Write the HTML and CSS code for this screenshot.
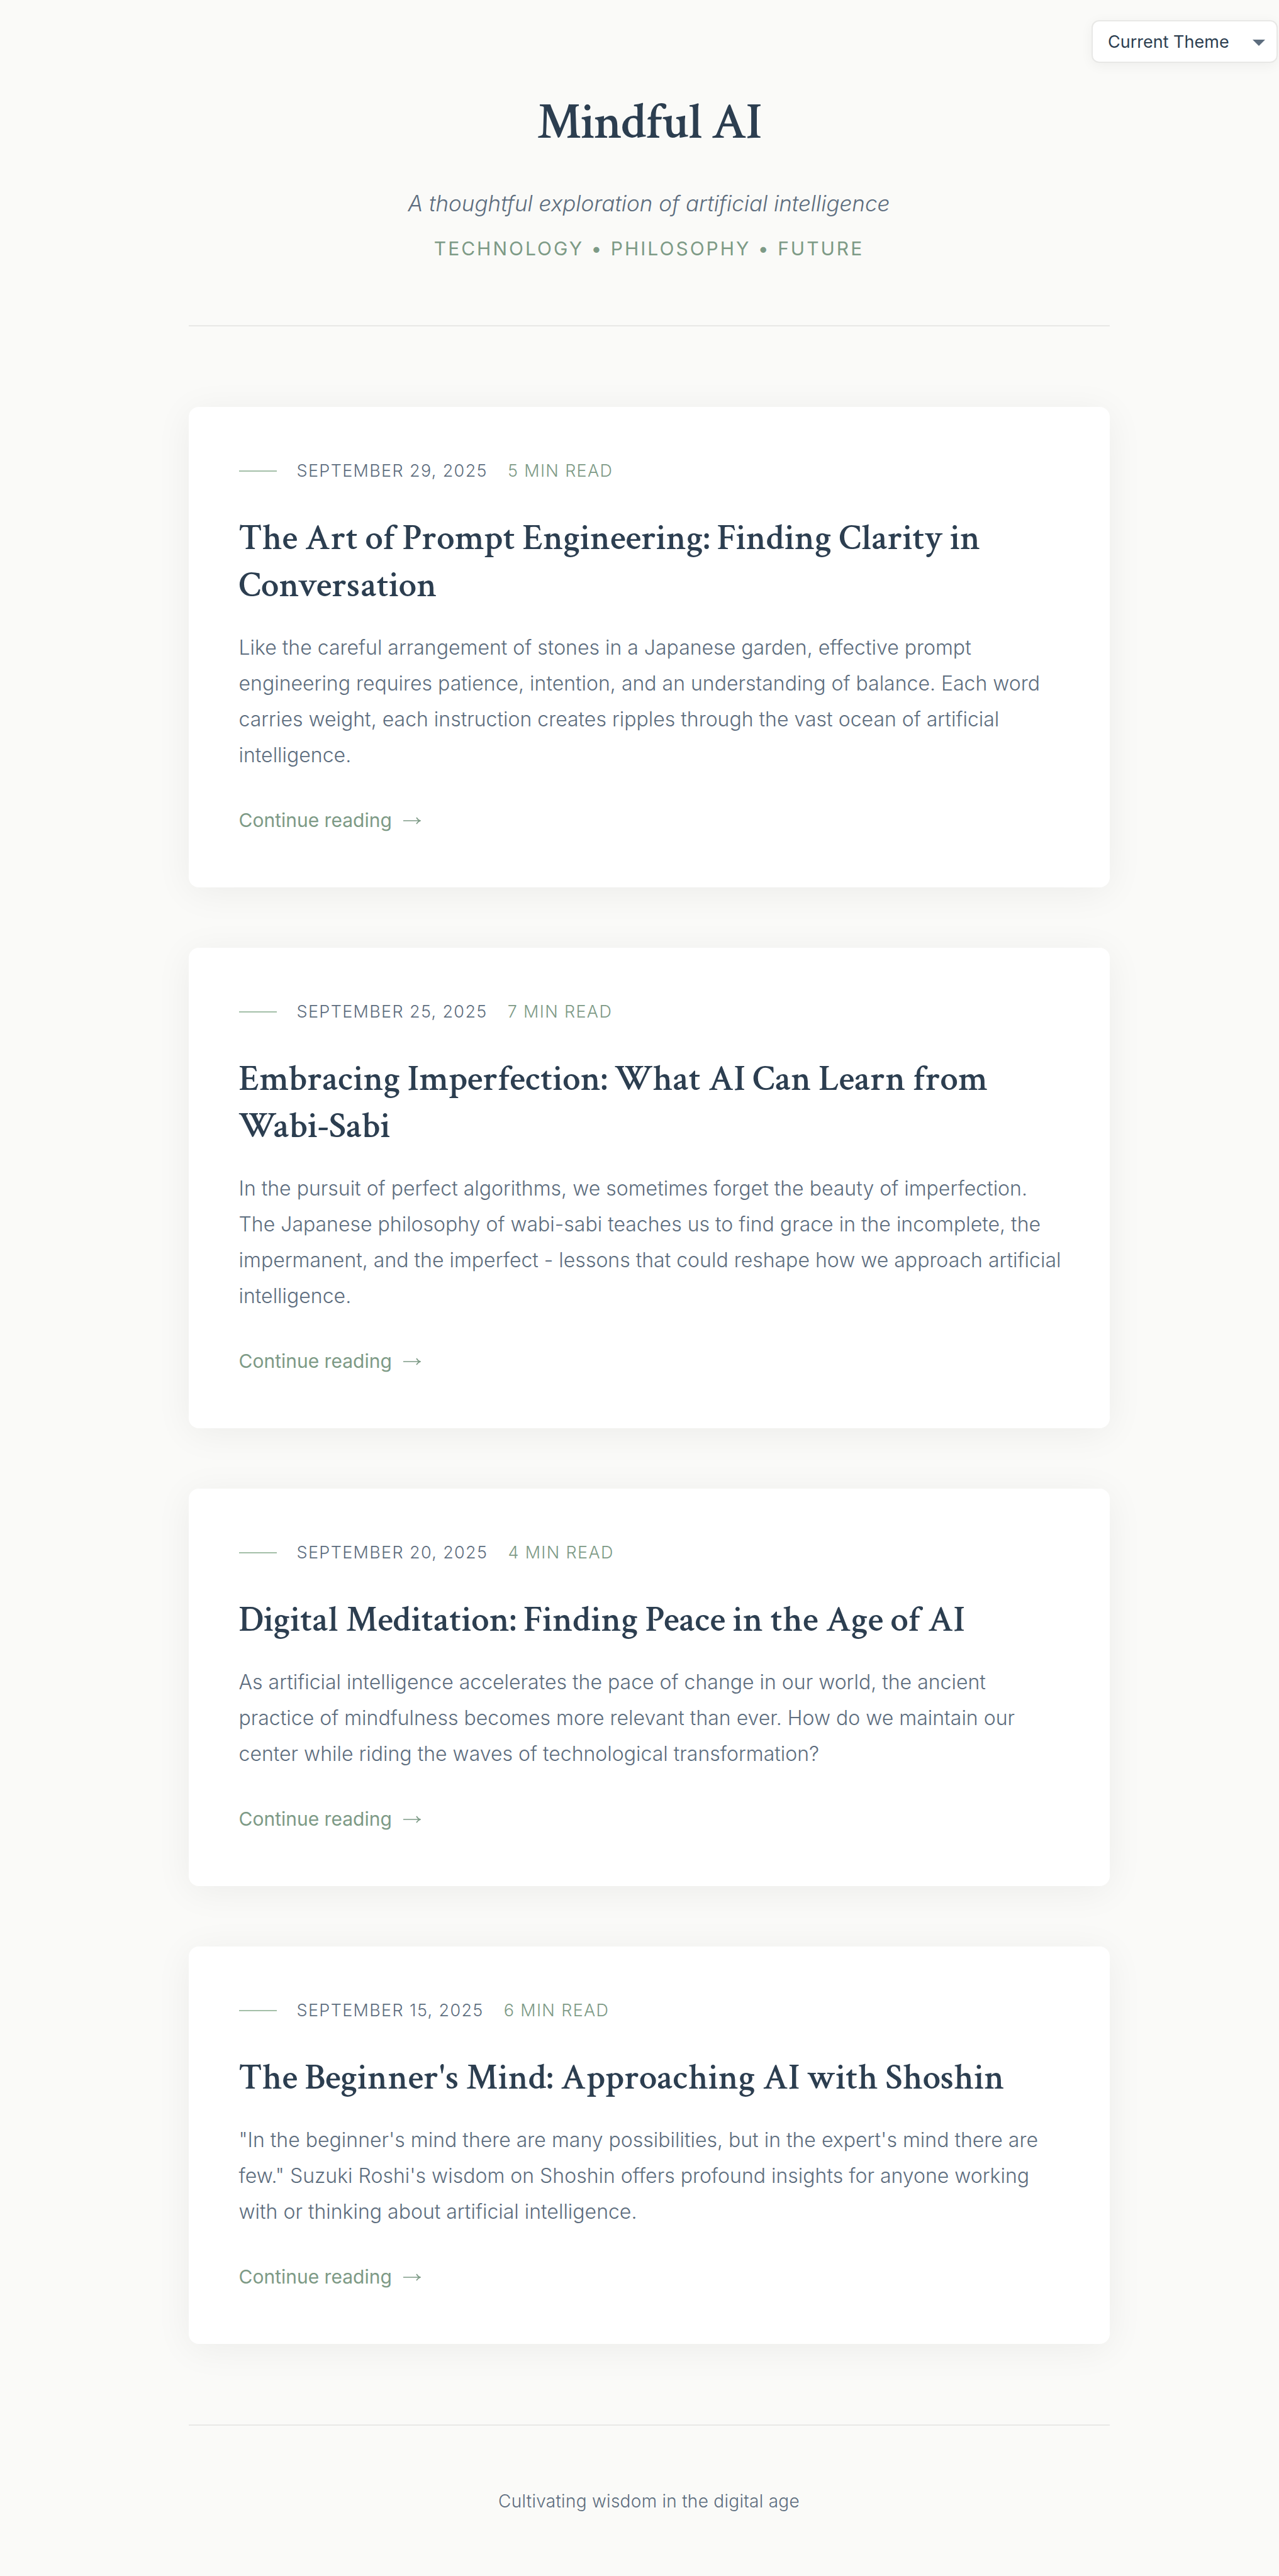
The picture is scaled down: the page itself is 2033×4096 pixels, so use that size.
FILE: index.html
```html
<!DOCTYPE html>
<html lang="en">
<head>
<meta charset="utf-8">
<meta name="viewport" content="width=device-width, initial-scale=1">
<title>Mindful AI</title>
<link rel="stylesheet" href="styles.css">
</head>
<body>
<svg class="sprite" aria-hidden="true">
  <symbol id="arrow" viewBox="0 0 28 12"><path d="M0 6H27M21 1C22.500 3.500 24.500 5.300 27 6C24.500 6.700 22.500 8.500 21 11" fill="none" stroke="currentColor" stroke-width="1.500"/></symbol>
</svg>
<div class="topbar">
  <div class="theme">
    <select class="theme-select" aria-label="Theme">
      <option>Current Theme</option>
    </select>
    <svg class="theme-caret" viewBox="0 0 20 10" aria-hidden="true"><path d="M0 0H20L10 10Z" fill="currentColor"/></svg>
  </div>
</div>
<div class="page">
  <header class="header">
    <h1 class="site-title">Mindful AI</h1>
    <p class="tagline">A thoughtful exploration of artificial intelligence</p>
    <p class="topics">Technology • Philosophy • Future</p>
  </header>
  <main class="posts">
    <article class="card">
      <div class="meta"><time datetime="2025-09-29">September 29, 2025</time><span class="read-time">5 min read</span></div>
      <h2 class="post-title">The Art of Prompt Engineering: Finding Clarity in Conversation</h2>
      <p class="excerpt">Like the careful arrangement of stones in a Japanese garden, effective prompt engineering requires patience, intention, and an understanding of balance. Each word carries weight, each instruction creates ripples through the vast ocean of artificial intelligence.</p>
      <a class="more" href="#">Continue reading <svg class="arrow" aria-hidden="true"><use href="#arrow"/></svg></a>
    </article>
    <article class="card">
      <div class="meta"><time datetime="2025-09-25">September 25, 2025</time><span class="read-time">7 min read</span></div>
      <h2 class="post-title">Embracing Imperfection: What AI Can Learn from Wabi-Sabi</h2>
      <p class="excerpt">In the pursuit of perfect algorithms, we sometimes forget the beauty of imperfection. The Japanese philosophy of wabi-sabi teaches us to find grace in the incomplete, the impermanent, and the imperfect - lessons that could reshape how we approach artificial intelligence.</p>
      <a class="more" href="#">Continue reading <svg class="arrow" aria-hidden="true"><use href="#arrow"/></svg></a>
    </article>
    <article class="card">
      <div class="meta"><time datetime="2025-09-20">September 20, 2025</time><span class="read-time">4 min read</span></div>
      <h2 class="post-title">Digital Meditation: Finding Peace in the Age of AI</h2>
      <p class="excerpt">As artificial intelligence accelerates the pace of change in our world, the ancient practice of mindfulness becomes more relevant than ever. How do we maintain our center while riding the waves of technological transformation?</p>
      <a class="more" href="#">Continue reading <svg class="arrow" aria-hidden="true"><use href="#arrow"/></svg></a>
    </article>
    <article class="card">
      <div class="meta"><time datetime="2025-09-15">September 15, 2025</time><span class="read-time">6 min read</span></div>
      <h2 class="post-title">The Beginner's Mind: Approaching AI with Shoshin</h2>
      <p class="excerpt">"In the beginner's mind there are many possibilities, but in the expert's mind there are few." Suzuki Roshi's wisdom on Shoshin offers profound insights for anyone working with or thinking about artificial intelligence.</p>
      <a class="more" href="#">Continue reading <svg class="arrow" aria-hidden="true"><use href="#arrow"/></svg></a>
    </article>
  </main>
  <footer class="footer">
    <p class="footer-text">Cultivating wisdom in the digital age</p>
  </footer>
</div>
</body>
</html>
```

FILE: styles.css
```css
:root {
  --ink: #2c3e50;
  --slate: #5d6d7e;
  --sage: #7d9a86;
  --sage-light: #a3bfa8;
  --line: #e8e8e6;
  --serif: "Crimson Text", "Liberation Serif", serif;
}

* { box-sizing: border-box; }

body {
  margin: 0;
  background: #fafaf8;
  color: var(--ink);
  font-family: Inter, "Liberation Sans", sans-serif;
}

h1, h2, p { margin: 0; }

.sprite { display: none; }

.topbar {
  display: flex;
  justify-content: flex-end;
  padding: 32px 2px 0 0;
}

.theme { position: relative; }

.theme-select {
  appearance: none;
  display: block;
  height: 68px;
  padding: 0 75px 0 24px;
  border: 2px solid var(--line);
  border-radius: 12px;
  background: #fff;
  box-shadow: 0 4px 20px rgba(0, 0, 0, .05);
  color: var(--ink);
  font: 400 27px Inter, "Liberation Sans", sans-serif;
}

.theme-caret {
  position: absolute;
  top: 31px;
  right: 20px;
  width: 20px;
  height: 10px;
  color: var(--slate);
  pointer-events: none;
}

.page {
  max-width: 1494px;
  margin: 0 auto;
  padding-left: 30px;
}

.header {
  padding: 47px 0 97px;
  border-bottom: 2px solid var(--line);
  text-align: center;
}

.site-title {
  font: 600 80px/96px var(--serif);
  letter-spacing: -0.02em;
}

.tagline {
  margin-top: 50px;
  color: var(--slate);
  font-size: 35px;
  font-style: italic;
  font-weight: 300;
  line-height: 60px;
}

.topics {
  margin-top: 17px;
  color: var(--sage);
  font-size: 30px;
  letter-spacing: 0.1em;
  line-height: 50px;
  text-transform: uppercase;
}

.posts {
  display: flex;
  flex-direction: column;
  gap: 96px;
  padding: 128px 0;
}

.card {
  padding: 80px 76px 80px 80px;
  border-radius: 16px;
  background: #fff;
  box-shadow: 0 8px 60px rgba(0, 0, 0, .06);
}

.meta {
  display: flex;
  align-items: center;
  gap: 32px;
  color: var(--slate);
  font-size: 27px;
  font-weight: 300;
  letter-spacing: 0.05em;
  line-height: 44px;
  text-transform: uppercase;
}

.meta::before {
  content: "";
  width: 60px;
  height: 2px;
  background: var(--sage-light);
}

.read-time { color: var(--sage); }

.post-title {
  margin-top: 48px;
  font: 600 57px/75px var(--serif);
}

.excerpt {
  margin-top: 32px;
  color: var(--slate);
  font-size: 32px;
  font-weight: 300;
  line-height: 57px;
}

.more {
  display: flex;
  align-items: center;
  gap: 18px;
  width: max-content;
  margin-top: 49px;
  color: var(--sage);
  font-size: 30px;
  line-height: 53px;
  text-decoration: none;
}

.arrow {
  width: 28px;
  height: 12px;
}

.footer {
  padding: 96px 0 95px;
  border-top: 2px solid var(--line);
  color: var(--slate);
  text-align: center;
}

.footer-text {
  font-size: 28px;
  font-weight: 300;
  letter-spacing: 0.01em;
  line-height: 48px;
}
```
